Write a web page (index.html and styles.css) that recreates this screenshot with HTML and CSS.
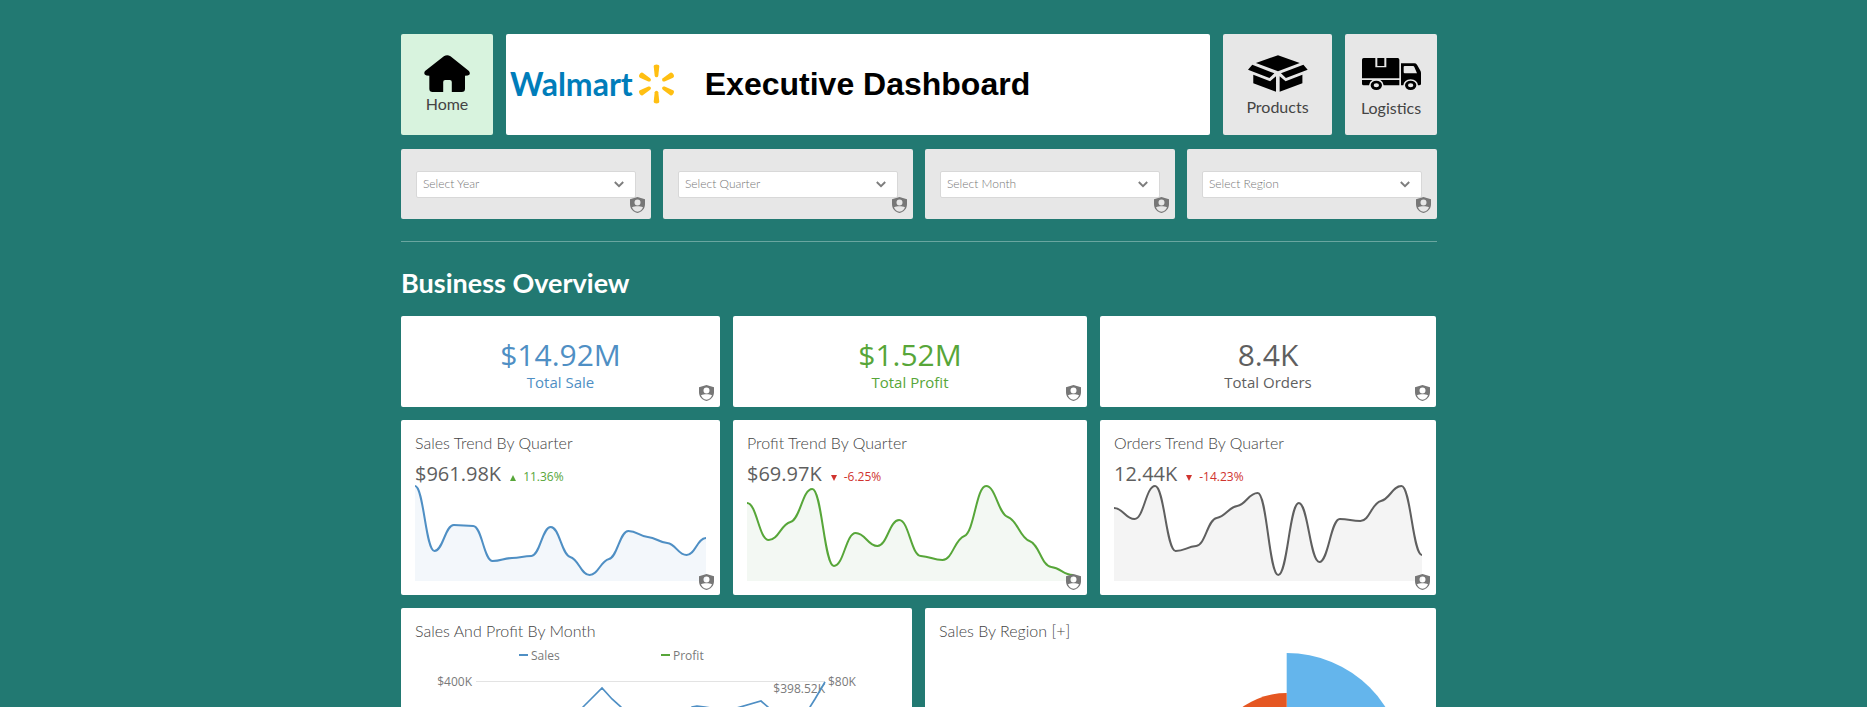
FILE: index.html
```html
<!DOCTYPE html>
<html lang="en">
<head>
<meta charset="utf-8">
<title>Walmart Executive Dashboard</title>
<link rel="stylesheet" href="styles.css">
</head>
<body>
<svg class="defs" aria-hidden="true">
  <symbol id="shield" viewBox="0 0 45 48">
    <path fill-rule="evenodd" d="M22.500 0L45 7V22C45 35 36 45 22.500 48C9 45 0 35 0 22V7ZM22.500 7.500A9 9 0 1 0 22.500 25.500A9 9 0 1 0 22.500 7.500ZM6 31C8 38 14 43 22.500 44.500C31 43 37 38 39 31C34 28 29 27.500 22.500 27.500C16 27.500 11 28 6 31Z"/>
  </symbol>
  <symbol id="chevron" viewBox="0 0 10 7">
    <path d="M.8 1L5 5.200L9.200 1" fill="none" stroke="#7d7d7d" stroke-width="1.900"/>
  </symbol>
</svg>
<main class="board">
  <header class="top">
    <a class="tile tile-active" href="#">
      <svg class="icon-home" viewBox="101 104 139 112" aria-hidden="true"><path d="M161 108Q171 101 181 108L236 152Q242 158 238 164Q235 167 225 167V206Q225 216 215 216H185V186Q185 180 179 180H165Q159 180 159 186V216H127Q117 216 117 206V167Q107 167 104 164Q99 158 105 152Z"/></svg>
      <span>Home</span>
    </a>
    <div class="banner">
      <div class="logo">
        <span class="logo-name">Walmart</span>
        <svg class="spark" viewBox="742 130 113 121" aria-hidden="true"><g fill="#ffbf12"><path id="ray" d="M790 137Q790 131 798.500 131Q807 131 807 137L804 165Q803 170 798.500 170Q794 170 793 165Z"/><use href="#ray" transform="rotate(60 798.500 190.500)"/><use href="#ray" transform="rotate(120 798.500 190.500)"/><use href="#ray" transform="rotate(180 798.500 190.500)"/><use href="#ray" transform="rotate(240 798.500 190.500)"/><use href="#ray" transform="rotate(300 798.500 190.500)"/></g></svg>
      </div>
      <h1>Executive Dashboard</h1>
    </div>
    <a class="tile" href="#">
      <svg class="icon-box" viewBox="592 105 182 111" aria-hidden="true"><path d="M683 105L749 129L683 154L616 129ZM605 134L672 160L657 174L592 149ZM760 134L773 149L707 174L692 160ZM608 164L659 184L677 169V216L608 190ZM757 164V190L688 216V169L706 184Z"/></svg>
      <span>Products</span>
    </a>
    <a class="tile" href="#">
      <svg class="icon-truck" viewBox="933 113 177 96" aria-hidden="true"><path fill-rule="evenodd" d="M938 113H973V141H1006V113H1040Q1045 113 1045 118V174H933V118Q933 113 938 113ZM979 113H1000V137H979ZM933 179H964Q955 184 954 195H938Q933 195 933 190ZM988 179H1045V195H998Q997 184 988 179ZM1050 129H1090Q1095 129 1098 133L1107 149Q1110 153 1110 158V190Q1110 195 1104 195H1101Q1099 178 1079 177Q1059 178 1057 195H1050ZM1061 137Q1058 137 1058 140V155Q1058 159 1061 159H1098L1090 140Q1089 137 1086 137ZM976 181A17 14 0 1 0 976 209A17 14 0 1 0 976 181ZM976 189A8 6 0 1 1 976 201A8 6 0 1 1 976 189ZM1079 181A17 14 0 1 0 1079 209A17 14 0 1 0 1079 181ZM1079 189A8 6 0 1 1 1079 201A8 6 0 1 1 1079 189Z"/></svg>
      <span>Logistics</span>
    </a>
  </header>

  <form class="filters">
    <div class="filter"><div class="field"><select aria-label="Year"><option>Select Year</option></select><svg class="chevron"><use href="#chevron"/></svg></div><svg class="shield"><use href="#shield"/></svg></div>
    <div class="filter"><div class="field"><select aria-label="Quarter"><option>Select Quarter</option></select><svg class="chevron"><use href="#chevron"/></svg></div><svg class="shield"><use href="#shield"/></svg></div>
    <div class="filter"><div class="field"><select aria-label="Month"><option>Select Month</option></select><svg class="chevron"><use href="#chevron"/></svg></div><svg class="shield"><use href="#shield"/></svg></div>
    <div class="filter"><div class="field"><select aria-label="Region"><option>Select Region</option></select><svg class="chevron"><use href="#chevron"/></svg></div><svg class="shield"><use href="#shield"/></svg></div>
  </form>

  <hr class="rule">
  <h2 class="section-title">Business Overview</h2>

  <section class="row thirds">
    <div class="card kpi blue"><strong>$14.92M</strong><span>Total Sale</span><svg class="shield"><use href="#shield"/></svg></div>
    <div class="card kpi green"><strong>$1.52M</strong><span>Total Profit</span><svg class="shield"><use href="#shield"/></svg></div>
    <div class="card kpi gray"><strong>8.4K</strong><span>Total Orders</span><svg class="shield"><use href="#shield"/></svg></div>
  </section>

  <section class="row thirds">
    <article class="card trend blue">
      <h3>Sales Trend By Quarter</h3>
      <p class="reading"><strong>$961.98K</strong><svg class="arrow up" viewBox="0 0 6 6"><path d="M3 0L6 6H0Z"/></svg><span class="up">11.36%</span></p>
      <svg class="spark-line" viewBox="0 0 150 98" preserveAspectRatio="none" data-values="3,68,42,43,78,75,73,44,74,92,76,48,54,60,72,55"></svg>
      <svg class="shield"><use href="#shield"/></svg>
    </article>
    <article class="card trend green">
      <h3>Profit Trend By Quarter</h3>
      <p class="reading"><strong>$69.97K</strong><svg class="arrow down" viewBox="0 0 6 6"><path d="M0 0H6L3 6Z"/></svg><span class="down">-6.25%</span></p>
      <svg class="spark-line" viewBox="0 0 150 98" preserveAspectRatio="none" data-values="20,57,39,6,83,50,63,37,73,77,53,3,34,58,84,92"></svg>
      <svg class="shield"><use href="#shield"/></svg>
    </article>
    <article class="card trend gray">
      <h3>Orders Trend By Quarter</h3>
      <p class="reading"><strong>12.44K</strong><svg class="arrow down" viewBox="0 0 6 6"><path d="M0 0H6L3 6Z"/></svg><span class="down">-14.23%</span></p>
      <svg class="spark-line" viewBox="0 0 150 98" preserveAspectRatio="none" data-values="25,36,3,68,63,35,23,10,92,20,79,36,38,18,3,72"></svg>
      <svg class="shield"><use href="#shield"/></svg>
    </article>
  </section>

  <section class="row halves">
    <article class="card chart">
      <h3>Sales And Profit By Month</h3>
      <svg viewBox="0 2 483 260" role="img" aria-label="Sales and profit by month">
        <path d="M104 16H113" stroke="#4f8fc4" stroke-width="2"/><text x="116" y="21">Sales</text>
        <path d="M246 16H255" stroke="#57a639" stroke-width="2"/><text x="258" y="21">Profit</text>
        <path d="M61 42.500H410" stroke="#e3e3e3"/>
        <text x="57" y="47" text-anchor="end">$400K</text><text x="413" y="47">$80K</text><text x="410" y="54" text-anchor="end">$398.52K</text>
        <path d="M155 82L169 67L176 60L187 49L197 60L205 67L224 88L265 88L277 68L282 67L290 68L312 72L325 68L346 62L353 68L374 92L395 68L400 60L410 43" fill="none" stroke="#4f8fc4" stroke-width="1.700"/>
      </svg>
    </article>
    <article class="card chart">
      <h3>Sales By Region [+]</h3>
      <svg viewBox="0 3 482 260" role="img" aria-label="Sales by region">
        <path d="M347 132V15A117 117 0 0 1 464 132Z" fill="#64b5ec"/>
        <path d="M347 132V55A77 77 0 0 0 270 132Z" fill="#e55722"/>
      </svg>
    </article>
  </section>
</main>
<script src="script.js"></script>
</body>
</html>
```
FILE: styles.css
```css
* { box-sizing: border-box; }
body {
  margin: 0;
  height: 100vh;
  overflow: hidden;
  padding: 34px 29px 0 0;
  background: #227972;
  color: #555;
  font-family: Lato, sans-serif;
}
h1, h2, h3, p { margin: 0; }
svg { display: block; }
.defs { position: absolute; width: 0; height: 0; }
.board { max-width: 1036px; margin: 0 auto; }

.top { display: grid; grid-template-columns: 92fr 704fr 109fr 92fr; gap: 13px; }
.tile {
  display: flex;
  flex-direction: column;
  align-items: center;
  min-height: 101px;
  padding-top: 21px;
  border-radius: 2px;
  background: #e7e7e7;
  color: #444;
  font-size: 16px;
  line-height: 20px;
  text-decoration: none;
}
.tile-active { background: #d8f3de; }
.icon-home { width: 46px; height: 37px; margin-bottom: 2px; }
.icon-box { width: 60px; height: 37px; margin-bottom: 5px; }
.icon-truck { width: 59px; height: 32px; margin: 3px 0 8px; }
.banner {
  display: flex;
  align-items: center;
  gap: 30px;
  padding: 0 0 2px 4px;
  border-radius: 2px;
  background: #fff;
}
.logo { display: flex; align-items: center; gap: 5px; }
.logo-name { color: #007dba; font: bold 32px/40px Lato, sans-serif; }
.spark { width: 37px; height: 40px; }
.banner h1 { color: #000; font: bold 32px/40px "Liberation Sans", Arial, sans-serif; }

.filters { display: grid; grid-template-columns: repeat(4, 1fr); gap: 12px; margin-top: 14px; }
.filter { position: relative; padding: 22px 15px 21px; border-radius: 2px; background: #e7e7e7; }
.field { position: relative; }
.field select {
  display: block;
  width: 100%;
  height: 27px;
  padding: 0 24px 2px 6px;
  border: 1px solid #d8d8d8;
  border-radius: 2px;
  background: #fff;
  color: #777;
  font: 300 12px Lato, sans-serif;
  appearance: none;
}
.chevron { position: absolute; top: 10px; right: 12px; width: 10px; height: 7px; pointer-events: none; }
.shield { position: absolute; right: 6px; bottom: 6px; width: 15px; height: 16px; fill: #777; }

.rule { height: 1px; margin: 22px 0 0; border: 0; background: #6aa6a0; }
.section-title { margin: 25px 0 17px; color: #fff; font-size: 27px; line-height: 32px; font-weight: 700; }

.row { display: grid; gap: 13px; margin-bottom: 13px; padding-right: 1px; }
.thirds { grid-template-columns: 319fr 354fr 336fr; }
.halves { grid-template-columns: 1fr 1fr; }
.card { position: relative; border-radius: 2px; background: #fff; }
.blue { --tone: #4f8fc4; --fill: #f3f7fb; }
.green { --tone: #57a639; --fill: #f3f8f3; }
.gray { --tone: #5f5f5f; --fill: #f4f4f4; }

.kpi {
  min-height: 91px;
  padding-top: 21px;
  color: var(--tone);
  font-family: "Open Sans", sans-serif;
  text-align: center;
}
.kpi strong { display: block; font-size: 30px; line-height: 36px; font-weight: 400; }
.kpi span { display: block; font-size: 15px; line-height: 18px; }

.trend { padding: 13px 14px 14px; }
.trend .shield { bottom: 5px; }
.card h3 { color: #444; font-size: 16px; line-height: 20px; font-weight: 300; }
.reading {
  display: flex;
  align-items: baseline;
  height: 30px;
  padding-top: 7px;
  font-family: "Open Sans", sans-serif;
  font-size: 12px;
  line-height: 28px;
}
.reading strong { color: #5f5f5f; font-size: 20px; font-weight: 400; }
.arrow { width: 6px; height: 6px; margin: 0 7px 0 9px; fill: currentColor; }
.up { color: #57a639; }
.down { color: #d0332e; }
.spark-line { width: 100%; height: 98px; }
.spark-line .area { fill: var(--fill); }
.spark-line .line { fill: none; stroke: var(--tone); stroke-width: 2px; vector-effect: non-scaling-stroke; }

.chart { padding: 13px 14px; }
.chart svg { width: 100%; }
.chart text { fill: #7a7a7a; font: 12px "Open Sans", sans-serif; }
```
FILE: script.js
```js
// Draws each sparkline as an area and a smooth line through its values.
document.querySelectorAll(".spark-line").forEach(function (svg) {
  var values = svg.dataset.values.split(",").map(Number);
  var step = 10;
  var slopes = values.map(function (v, i) {
    if (i === 0 || i === values.length - 1) return 0;
    var before = v - values[i - 1];
    var after = values[i + 1] - v;
    if (before * after <= 0) return 0;
    return 0.3 * Math.sign(before) * Math.min(Math.abs(before), Math.abs(after)) / step;
  });
  var d = "M0 " + values[0];
  for (var i = 1; i < values.length; i++) {
    var x = i * step;
    d += "C" + [
      x - step + 4.5, values[i - 1] + slopes[i - 1] * 4.5,
      x - 4.5, values[i] - slopes[i] * 4.5,
      x, values[i]
    ].join(" ");
  }
  function add(name, path) {
    var node = document.createElementNS("http://www.w3.org/2000/svg", "path");
    node.setAttribute("class", name);
    node.setAttribute("d", path);
    svg.appendChild(node);
  }
  add("area", d + "V98H0Z");
  add("line", d);
});
```
